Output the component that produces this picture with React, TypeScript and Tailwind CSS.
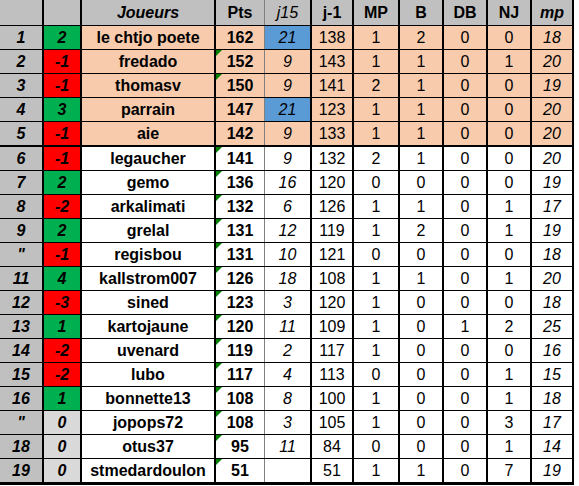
import React from 'react';

type Row = {
  rank: string;
  delta: number;
  name: string;
  pts: number;
  j15: string;
  j1: number;
  mp: number;
  b: number;
  db: number;
  nj: number;
  moy: number;
  top?: boolean;
  blue?: boolean;
  flag?: boolean;
};

const ROWS: Row[] = [
  { rank: '1', delta: 2, name: 'le chtjo poete', pts: 162, j15: '21', j1: 138, mp: 1, b: 2, db: 0, nj: 0, moy: 18, top: true, blue: true },
  { rank: '2', delta: -1, name: 'fredado', pts: 152, j15: '9', j1: 143, mp: 1, b: 1, db: 0, nj: 1, moy: 20, top: true, flag: true },
  { rank: '3', delta: -1, name: 'thomasv', pts: 150, j15: '9', j1: 141, mp: 2, b: 1, db: 0, nj: 0, moy: 19, top: true, flag: true },
  { rank: '4', delta: 3, name: 'parrain', pts: 147, j15: '21', j1: 123, mp: 1, b: 1, db: 0, nj: 0, moy: 20, top: true, blue: true },
  { rank: '5', delta: -1, name: 'aie', pts: 142, j15: '9', j1: 133, mp: 1, b: 1, db: 0, nj: 0, moy: 20, top: true },
  { rank: '6', delta: -1, name: 'legaucher', pts: 141, j15: '9', j1: 132, mp: 2, b: 1, db: 0, nj: 0, moy: 20, flag: true },
  { rank: '7', delta: 2, name: 'gemo', pts: 136, j15: '16', j1: 120, mp: 0, b: 0, db: 0, nj: 0, moy: 19, flag: true },
  { rank: '8', delta: -2, name: 'arkalimati', pts: 132, j15: '6', j1: 126, mp: 1, b: 1, db: 0, nj: 1, moy: 17, flag: true },
  { rank: '9', delta: 2, name: 'grelal', pts: 131, j15: '12', j1: 119, mp: 1, b: 2, db: 0, nj: 1, moy: 19, flag: true },
  { rank: '"', delta: -1, name: 'regisbou', pts: 131, j15: '10', j1: 121, mp: 0, b: 0, db: 0, nj: 0, moy: 18, flag: true },
  { rank: '11', delta: 4, name: 'kallstrom007', pts: 126, j15: '18', j1: 108, mp: 1, b: 1, db: 0, nj: 1, moy: 20, flag: true },
  { rank: '12', delta: -3, name: 'sined', pts: 123, j15: '3', j1: 120, mp: 1, b: 0, db: 0, nj: 0, moy: 18, flag: true },
  { rank: '13', delta: 1, name: 'kartojaune', pts: 120, j15: '11', j1: 109, mp: 1, b: 0, db: 1, nj: 2, moy: 25, flag: true },
  { rank: '14', delta: -2, name: 'uvenard', pts: 119, j15: '2', j1: 117, mp: 1, b: 0, db: 0, nj: 0, moy: 16, flag: true },
  { rank: '15', delta: -2, name: 'lubo', pts: 117, j15: '4', j1: 113, mp: 0, b: 0, db: 0, nj: 1, moy: 15, flag: true },
  { rank: '16', delta: 1, name: 'bonnette13', pts: 108, j15: '8', j1: 100, mp: 1, b: 0, db: 0, nj: 1, moy: 18, flag: true },
  { rank: '"', delta: 0, name: 'jopops72', pts: 108, j15: '3', j1: 105, mp: 1, b: 0, db: 0, nj: 3, moy: 17, flag: true },
  { rank: '18', delta: 0, name: 'otus37', pts: 95, j15: '11', j1: 84, mp: 0, b: 0, db: 0, nj: 1, moy: 14, flag: true },
  { rank: '19', delta: 0, name: 'stmedardoulon', pts: 51, j15: '', j1: 51, mp: 1, b: 1, db: 0, nj: 7, moy: 19, flag: true },
];

const GRID = 'grid grid-cols-[44px_38px_134px_49px_47px_42px_46px_44px_44px_44px_42px]';
const CELL = 'flex items-center justify-center border-r-2 border-black';

export default function App() {
  return (
    <div className="w-[579px] h-[486px] bg-white font-['Liberation_Sans',Arial,sans-serif] text-[16px] text-black leading-none">
      <div className="w-[574px]">
        {/* En-tête */}
        <div className={`${GRID} h-[26px] bg-[#c0c0c0] border-b border-black`}>
          <div className={CELL} />
          <div className={CELL} />
          <div className={`${CELL} font-bold italic`}>Joueurs</div>
          <div className="flex items-center justify-center border-r border-[#808080] font-bold">Pts</div>
          <div className={`${CELL} italic`}>j15</div>
          <div className={`${CELL} font-bold`}>j-1</div>
          <div className={`${CELL} font-bold`}>MP</div>
          <div className={`${CELL} font-bold`}>B</div>
          <div className={`${CELL} font-bold`}>DB</div>
          <div className={`${CELL} font-bold`}>NJ</div>
          <div className={`${CELL} font-bold italic`}>mp</div>
        </div>

        {ROWS.map((r, i) => {
          const bg = r.top ? 'bg-[#f8cbad]' : 'bg-white';
          const deltaBg = r.delta > 0 ? 'bg-[#00b050]' : r.delta < 0 ? 'bg-[#ff0000]' : 'bg-[#d9d9d9]';
          const border =
            i === 4 ? 'h-[25px] border-b-2' : i === ROWS.length - 1 ? 'h-[26px] border-b-[3px]' : 'h-[24px] border-b';
          return (
            <div key={i} className={`${GRID} ${border} border-black ${bg}`}>
              <div className={`${CELL} bg-[#c0c0c0] font-bold italic`}>{r.rank}</div>
              <div className={`${CELL} ${deltaBg} font-bold italic`}>{r.delta}</div>
              <div className={`${CELL} font-bold whitespace-nowrap`}>{r.name}</div>
              <div className="relative flex items-center justify-center border-r border-[#808080] font-bold">
                {r.flag && (
                  <span className="absolute left-0 top-0 w-0 h-0 border-t-[6px] border-r-[6px] border-t-[#008000] border-r-transparent" />
                )}
                {r.pts}
              </div>
              <div className={`${CELL} italic ${r.blue ? 'bg-[#5b9bd5]' : ''}`}>{r.j15}</div>
              <div className={CELL}>{r.j1}</div>
              <div className={CELL}>{r.mp}</div>
              <div className={CELL}>{r.b}</div>
              <div className={CELL}>{r.db}</div>
              <div className={CELL}>{r.nj}</div>
              <div className={`${CELL} italic`}>{r.moy}</div>
            </div>
          );
        })}
      </div>
    </div>
  );
}
